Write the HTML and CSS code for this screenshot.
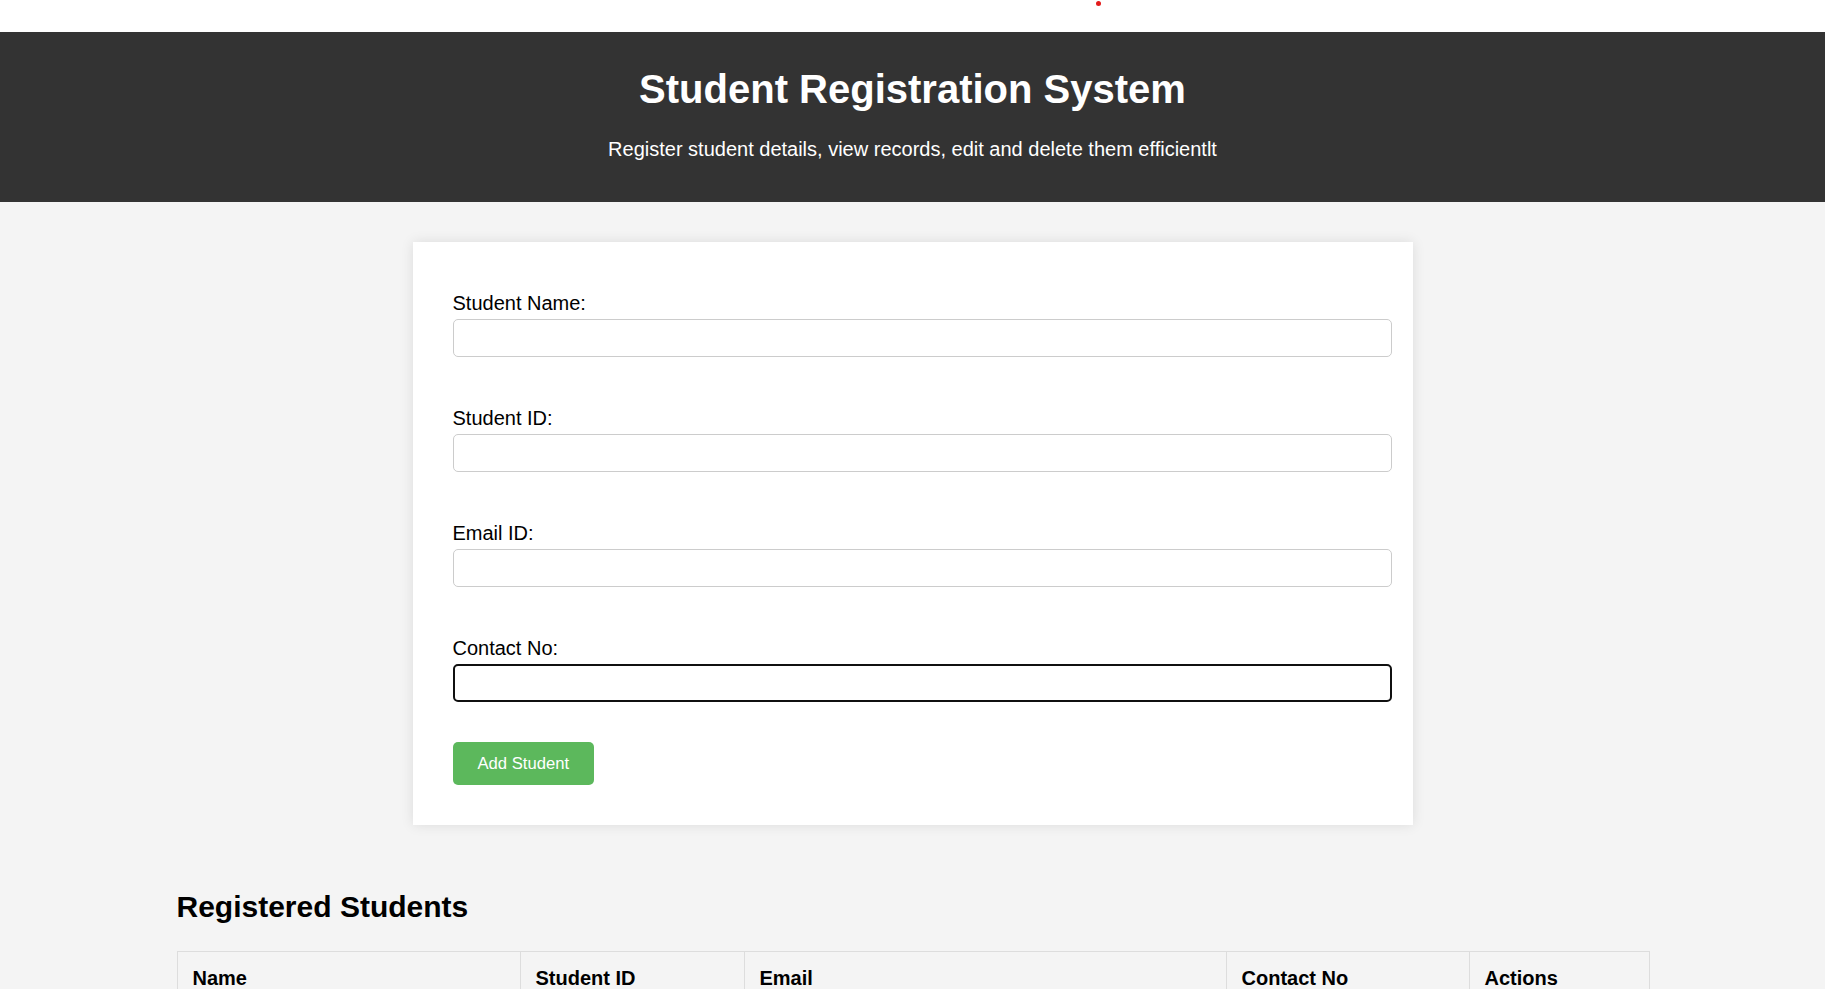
FILE: index.html
```html
<!DOCTYPE html>
<html lang="en">
<head>
<meta charset="utf-8">
<title>Student Registration System</title>
<link rel="stylesheet" href="styles.css">
</head>
<body>
<div class="topbar"><span class="topbar-dot"></span></div>
<header class="site-header">
  <h1 class="site-title">Student Registration System</h1>
  <p class="site-subtitle">Register student details, view records, edit and delete them efficientlt</p>
</header>
<main class="content">
  <form class="card">
    <div class="form-group">
      <label class="field-label" for="name">Student Name:</label>
      <input class="field" id="name" type="text">
    </div>
    <div class="form-group">
      <label class="field-label" for="sid">Student ID:</label>
      <input class="field" id="sid" type="text">
    </div>
    <div class="form-group">
      <label class="field-label" for="email">Email ID:</label>
      <input class="field" id="email" type="text">
    </div>
    <div class="form-group">
      <label class="field-label" for="contact">Contact No:</label>
      <input class="field field-focused" id="contact" type="text">
    </div>
    <button class="btn-add" type="button">Add Student</button>
  </form>
  <section class="records">
    <h2 class="records-title">Registered Students</h2>
    <table class="records-table">
      <colgroup>
        <col class="col-name">
        <col class="col-id">
        <col class="col-email">
        <col class="col-contact">
        <col class="col-actions">
      </colgroup>
      <thead>
        <tr>
          <th>Name</th>
          <th>Student ID</th>
          <th>Email</th>
          <th>Contact No</th>
          <th>Actions</th>
        </tr>
      </thead>
      <tbody></tbody>
    </table>
  </section>
</main>
</body>
</html>
```
FILE: styles.css
```css
* {
  box-sizing: border-box;
}

body {
  margin: 0;
  background: #f4f4f4;
  font-family: "Liberation Sans", Arial, sans-serif;
  color: #000;
}

.topbar {
  position: relative;
  height: 32px;
  background: #fff;
}

.topbar-dot {
  position: absolute;
  left: 1095.5px;
  top: 0.5px;
  width: 5px;
  height: 5px;
  border-radius: 50%;
  background: #e31b1b;
}

.site-header {
  background: #333;
  color: #fff;
  text-align: center;
  padding: 34px 20px 40.4px;
}

.site-title {
  margin: 0 0 26.4px;
  font-size: 40px;
  line-height: 46px;
  font-weight: bold;
}

.site-subtitle {
  margin: 0;
  font-size: 20px;
  line-height: 23px;
}

.content {
  display: flex;
  flex-direction: column;
  align-items: center;
  padding-bottom: 40px;
}

.card {
  width: 1000px;
  margin-top: 40.3px;
  padding: 40px;
  background: #fff;
  box-shadow: 0 0 12px rgba(0, 0, 0, 0.1);
}

.form-group {
  display: flex;
  flex-direction: column;
  align-items: flex-start;
  margin-bottom: 40px;
}

.field-label {
  display: block;
  margin: 9.5px 0 4.5px;
  font-size: 20px;
  line-height: 23px;
}

.field {
  display: block;
  width: calc(100% + 19px);
  height: 38px;
  padding: 0 8.5px;
  border: 1px solid #ccc;
  border-radius: 5px;
  background: #fff;
  font-family: inherit;
  font-size: 16.67px;
  outline: none;
}

.field-focused {
  border: 2px solid #101010;
  padding: 0 7.5px;
}

.btn-add {
  display: block;
  height: 43px;
  padding: 0 25px;
  border: 0;
  border-radius: 5px;
  background: #5cb85c;
  color: #fff;
  font-family: inherit;
  font-size: 16.67px;
  line-height: 19px;
  cursor: pointer;
}

.records {
  width: 1472px;
  margin-top: 65px;
}

.records-title {
  margin: 0 0 26px;
  font-size: 30px;
  line-height: 34.5px;
  font-weight: bold;
}

.records-table {
  width: 1472px;
  border-collapse: collapse;
  table-layout: fixed;
}

.col-name { width: 343px; }
.col-id { width: 224px; }
.col-email { width: 482px; }
.col-contact { width: 243px; }
.col-actions { width: 180px; }

.records-table th {
  border: 1px solid #ddd;
  padding: 15px;
  text-align: left;
  font-size: 20px;
  line-height: 23px;
  font-weight: bold;
}
```
